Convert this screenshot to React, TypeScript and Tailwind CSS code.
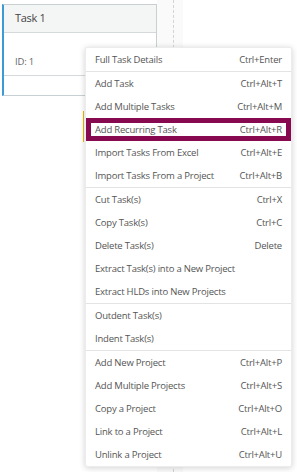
import React from "react";

type Item = { label: string; shortcut?: string; highlight?: boolean };

const groups: Item[][] = [
  [{ label: "Full Task Details", shortcut: "Ctrl+Enter" }],
  [
    { label: "Add Task", shortcut: "Ctrl+Alt+T" },
    { label: "Add Multiple Tasks", shortcut: "Ctrl+Alt+M" },
    { label: "Add Recurring Task", shortcut: "Ctrl+Alt+R", highlight: true },
    { label: "Import Tasks From Excel", shortcut: "Ctrl+Alt+E" },
    { label: "Import Tasks From a Project", shortcut: "Ctrl+Alt+B" },
  ],
  [
    { label: "Cut Task(s)", shortcut: "Ctrl+X" },
    { label: "Copy Task(s)", shortcut: "Ctrl+C" },
    { label: "Delete Task(s)", shortcut: "Delete" },
    { label: "Extract Task(s) into a New Project" },
    { label: "Extract HLDs into New Projects" },
  ],
  [{ label: "Outdent Task(s)" }, { label: "Indent Task(s)" }],
  [
    { label: "Add New Project", shortcut: "Ctrl+Alt+P" },
    { label: "Add Multiple Projects", shortcut: "Ctrl+Alt+S" },
    { label: "Copy a Project", shortcut: "Ctrl+Alt+O" },
    { label: "Link to a Project", shortcut: "Ctrl+Alt+L" },
    { label: "Unlink a Project", shortcut: "Ctrl+Alt+U" },
  ],
];

function Row({ item }: { item: Item }) {
  return (
    <div
      className={
        "relative flex h-[23px] items-center justify-between whitespace-nowrap pl-[9px] pr-[9px] pt-[1px] " +
        (item.highlight ? "outline-[5px] outline-[#870a50] -outline-offset-[5px]" : "")
      }
    >
      <span>{item.label}</span>
      {item.shortcut && <span>{item.shortcut}</span>}
    </div>
  );
}

export default function App() {
  return (
    <div
      className="relative h-[472px] w-[297px] overflow-hidden bg-white"
      style={{ fontFamily: '"Open Sans", "Noto Sans", sans-serif' }}
    >
      <div className="flex h-full">
        <div className="ml-[2px] mt-[4px] h-[92px] w-[155px] border border-l-2 border-[#c9d0d3] border-l-[#3d9ad6] bg-white">
          <div className="flex h-[28px] items-center border-b border-[#d4d9db] bg-[#f4f5f5] pl-[11px] text-[11px] tracking-[-0.3px] text-[#444]">
            Task 1
          </div>
          <div className="flex h-[43px] items-end border-b border-[#d4d9db] pb-[6px] pl-[11px] text-[9.5px] tracking-[-0.2px] text-[#666]">
            ID: 1
          </div>
        </div>
        <div className="flex h-full w-[26px] bg-[#fafafa] pl-[16px]">
          <div className="h-full border-l border-dashed border-[#d4d4d4]" />
        </div>
      </div>

      <div className="absolute left-[83px] top-[111px] h-[31px] w-px bg-[#f0b400]" />

      <div className="absolute left-[85px] top-[47px] w-[207px] rounded-[2px] border border-[#ececec] bg-white text-[9.5px] tracking-[-0.2px] text-[#555] shadow-[0_1px_6px_rgba(0,0,0,0.18)]">
        {groups.map((g, gi) => (
          <div key={gi} className={gi > 0 ? "border-t border-[#e3e3e3]" : ""}>
            {g.map((it) => (
              <Row key={it.label} item={it} />
            ))}
          </div>
        ))}
      </div>
    </div>
  );
}
